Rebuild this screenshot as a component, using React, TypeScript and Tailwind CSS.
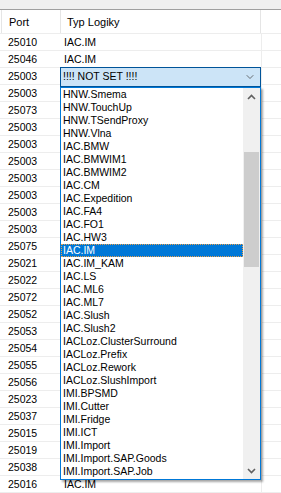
import { ChevronDown } from "lucide-react";

const ports = [
  "25010", "25046", "25003", "25003", "25073", "25003", "25003", "25003", "25003",
  "25003", "25003", "25003", "25075", "25021", "25022", "25072", "25052", "25053",
  "25054", "25055", "25056", "25023", "25037", "25015", "25019", "25038", "25016",
];

const options = [
  "HNW.Smema", "HNW.TouchUp", "HNW.TSendProxy", "HNW.Vlna", "IAC.BMW", "IAC.BMWIM1",
  "IAC.BMWIM2", "IAC.CM", "IAC.Expedition", "IAC.FA4", "IAC.FO1", "IAC.HW3", "IAC.IM",
  "IAC.IM_KAM", "IAC.LS", "IAC.ML6", "IAC.ML7", "IAC.Slush", "IAC.Slush2",
  "IACLoz.ClusterSurround", "IACLoz.Prefix", "IACLoz.Rework", "IACLoz.SlushImport",
  "IMI.BPSMD", "IMI.Cutter", "IMI.Fridge", "IMI.ICT", "IMI.Import", "IMI.Import.SAP.Goods",
  "IMI.Import.SAP.Job",
];

function Arrow({ up }: { up?: boolean }) {
  return (
    <svg width="9" height="6" viewBox="0 0 9 6" className={up ? "" : "rotate-180"}>
      <path d="M1 5 L4.5 1.5 L8 5" fill="none" stroke="#606060" strokeWidth="1.6" />
    </svg>
  );
}

export default function App() {
  return (
    <div className="relative h-[493px] w-[281px] overflow-hidden bg-white font-['Liberation_Sans',Arial,sans-serif] text-[10.5px] text-black">
      <div className="h-[10px] border-b border-[#a0a0a0] bg-[#f0f0f0]" />

      <div className="flex h-[24px] items-center border-b border-[#ededed] text-[11px]">
        <div className="ml-px h-full w-[60px] border-x border-[#e5e5e5] pl-[7px] leading-[24px]">Port</div>
        <div className="h-full w-[200px] border-r border-[#e5e5e5] pl-[6px] leading-[24px]">Typ Logiky</div>
      </div>

      {ports.map((port, i) => (
        <div key={i} className="flex h-[17px] border-b border-[#ededed] leading-[16px]">
          <div className="w-[61px] pl-[8px]">{port}</div>
          <div className="w-[201px] border-r border-[#ededed] pl-[3px]">
            {i < 2 || i === ports.length - 1 ? "IAC.IM" : ""}
          </div>
        </div>
      ))}

      <div className="absolute left-[60px] top-[67px] flex h-[20px] w-[201px] items-center justify-between border border-[#005499] bg-[#cce4f7] pl-[2px] pr-[4px]">
        <span>!!!! NOT SET !!!!</span>
        <ChevronDown size={12} strokeWidth={1.5} color="#444" />
      </div>

      <div className="absolute left-[60px] top-[87px] flex h-[393px] w-[201px] border border-[#0078d7] bg-white shadow-[2px_2px_2px_rgba(0,0,0,0.35)]">
        <div className="flex w-[182px] flex-col">
          {options.map((opt) => (
            <div
              key={opt}
              className={
                opt === "IAC.IM"
                  ? "h-[13px] bg-[#0078d7] pl-[2px] leading-[13px] text-white outline-1 outline-offset-[-1px] outline-dotted outline-[#e8a04c]"
                  : "h-[13px] pl-[2px] leading-[13px]"
              }
            >
              {opt}
            </div>
          ))}
        </div>
        <div className="flex w-[17px] flex-col bg-[#f0f0f0]">
          <div className="flex h-[17px] items-center justify-center">
            <Arrow up />
          </div>
          <div className="mt-[47px] ml-px h-[115px] w-[15px] bg-[#cdcdcd]" />
          <div className="flex-1" />
          <div className="flex h-[17px] items-center justify-center">
            <Arrow />
          </div>
        </div>
      </div>
    </div>
  );
}
